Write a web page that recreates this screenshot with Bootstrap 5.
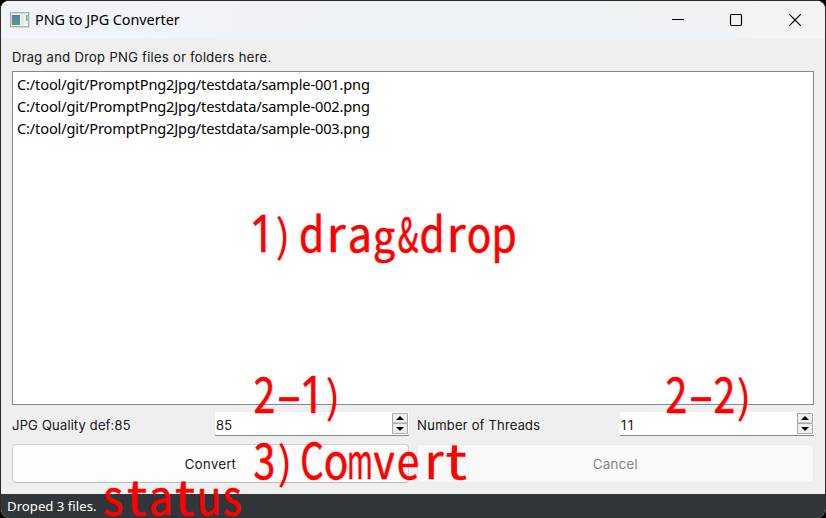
<!DOCTYPE html>
<html lang="en">
<head>
<meta charset="utf-8">
<meta name="viewport" content="width=device-width, initial-scale=1">
<title>PNG to JPG Converter</title>
<link href="https://cdn.jsdelivr.net/npm/bootstrap@5.3.0/dist/css/bootstrap.min.css" rel="stylesheet">
<style>
  body { background: #000; font-family: "Liberation Sans", sans-serif; font-size: 13px; color: #000; }
  .app-window { width: 826px; height: 518px; border: 1px solid #2b2b2d; border-bottom: 0; border-radius: 9px; background: #efefef; }
  .title-bar { height: 38px; background: linear-gradient(90deg, #f1f3f9, #edf3f7 65%, #f2f3f4); padding: 0 1px 0 9px; }
  .title-text, .file-list, .status-bar { font-family: "Noto Sans", sans-serif; }
  .title-text { font-size: 14.4px; margin-left: 5px; letter-spacing: -.05px; }
  .win-control { width: 58.5px; height: 38px; }
  .main-area { padding: 0 11px; }
  .gothic { font-family: "Inter", sans-serif; font-weight: 300; line-height: 16px; white-space: nowrap; letter-spacing: .2px; -webkit-text-stroke: .2px currentColor; }
  .hint { margin-top: 10px; height: 22px; letter-spacing: .39px; }
  .file-list { height: 334px; background: #fff; border: 1px solid #828790; padding: 1px 4px; font-size: 14.6px; letter-spacing: -.15px; line-height: 22px; }
  .settings { height: 24px; margin-top: 7px; }
  .setting-label { width: 203px; padding-top: 2px; letter-spacing: .27px; }
  .setting-label + .spin { flex: none; }
  .label-threads { width: 211px; letter-spacing: .3px; }
  .spin { width: 194px; height: 24px; background: #fff; border-bottom: 1px solid #868686; padding: 0 1px 0 1px; }
  .spin span { padding-top: 2px; }
  .digits-wide { letter-spacing: 2px; }
  .push { height: 39px; border: 1px solid #d0d0d0; border-bottom-color: #bcbcbc; border-radius: 4px; background: #fdfdfd; font-size: 13px; padding: 0; color: #000; letter-spacing: .5px; }
  .push:disabled { color: #777; background: #f9f9f9; border-color: #ebebeb; opacity: 1; }
  .status-bar { height: 24px; background: #31363a; color: #fff; font-size: 13.2px; padding-left: 6px; line-height: 25px; }
  .notes { left: 0; top: 0; pointer-events: none; }
  .notes text { font: 49px "Noto Sans CJK JP", sans-serif; fill: #f00; stroke: #f00; stroke-width: .6px; text-anchor: middle; }
  .notes .paren { font-size: 44px; stroke-width: 0; }
  .notes .one { font-family: "Noto Sans", sans-serif; }
</style>
<script src="https://cdn.jsdelivr.net/npm/bootstrap@5.3.0/dist/js/bootstrap.bundle.min.js"></script>
</head>
<body class="overflow-hidden position-relative">
<div class="app-window d-flex flex-column overflow-hidden">
  <header class="title-bar d-flex align-items-center flex-shrink-0">
    <svg width="20" height="16" viewBox="0 0 20 16"><defs><linearGradient id="g" x2="0" y2="1"><stop stop-color="#4c7fa2"/><stop offset="1" stop-color="#55a178"/></linearGradient></defs><rect x=".75" y=".75" width="18" height="14" fill="#f5f5f5" stroke="#a6a8aa" stroke-width="1.3"/><rect x="2" y="3" width="8" height="10" fill="url(#g)"/><rect x="11" y="3" width="3" height="10" fill="#e4e7e9"/><rect x="16" y="3" width="1.5" height="6" fill="#6eaa98"/></svg>
    <span class="title-text">PNG to JPG Converter</span>
    <div class="d-flex ms-auto">
      <div class="win-control d-flex align-items-center justify-content-center"><svg width="14" height="14"><path d="M1 6.5h12" stroke="#000" stroke-width="1.2"/></svg></div>
      <div class="win-control d-flex align-items-center justify-content-center"><svg width="14" height="14"><rect x="1.5" y="1.5" width="11" height="11" rx="1.4" fill="none" stroke="#000" stroke-width="1.2"/></svg></div>
      <div class="win-control d-flex align-items-center justify-content-center"><svg width="14" height="14"><path d="M1.2 1.2 12.8 12.8M12.8 1.2 1.2 12.8" stroke="#000" stroke-width="1.2"/></svg></div>
    </div>
  </header>
  <main class="main-area flex-grow-1">
    <div class="hint gothic"><span>Drag and Drop PNG files or folders here.</span></div>
    <div class="file-list">
      <div><span>C:/tool/git/PromptPng2Jpg/testdata/sample-001.png</span></div>
      <div><span>C:/tool/git/PromptPng2Jpg/testdata/sample-002.png</span></div>
      <div><span>C:/tool/git/PromptPng2Jpg/testdata/sample-003.png</span></div>
    </div>
    <div class="settings d-flex align-items-center">
      <div class="setting-label gothic">JPG Quality def:85</div>
      <div class="spin d-flex align-items-center gothic"><span>85</span>
        <svg class="ms-auto" width="16" height="21"><path d="M.5.5h15v9.5H.5zM.5 10.500h15v10H.5z" fill="#eee" stroke="#aaa"/><path d="M4 7 8 3l4 4zM4 14h8l-4 4z"/></svg></div>
      <div class="setting-label label-threads gothic ps-2">Number of Threads</div>
      <div class="spin d-flex align-items-center gothic"><span class="digits-wide">11</span>
        <svg class="ms-auto" width="16" height="21"><path d="M.5.5h15v9.5H.5zM.5 10.500h15v10H.5z" fill="#eee" stroke="#aaa"/><path d="M4 7 8 3l4 4zM4 14h8l-4 4z"/></svg></div>
    </div>
    <div class="d-flex gap-2 mt-2">
      <button class="btn push gothic w-50">Convert</button>
      <button class="btn push gothic w-50" disabled>Cancel</button>
    </div>
  </main>
  <footer class="status-bar flex-shrink-0">Droped 3 files.</footer>
</div>
<svg class="notes position-absolute" width="826" height="518">
  <g transform="translate(0 251.500)">
    <text class="one" transform="translate(262 0) scale(.9 1.03)">1</text>
    <text class="paren" transform="translate(283 0)">)</text>
    <text transform="translate(300 0) scale(.83 .96)" x="14">d</text>
    <text transform="translate(336 0) scale(1 .96)">r</text>
    <text transform="translate(300 0) scale(.88 .96)" x="68">a</text>
    <text transform="translate(384 0) scale(.8 .88)">g</text>
    <text transform="translate(408 0) scale(.62 .96)">&amp;</text>
    <text transform="translate(432 0) scale(.83 .96)">d</text>
    <text transform="translate(456 0) scale(1 .96)">r</text>
    <text transform="translate(479 0) scale(.83 .96)">o</text>
    <text transform="translate(504 0) scale(.83 .96)">p</text>
  </g>
  <g transform="translate(252 412.500)">
    <text transform="translate(12.500 0) scale(.8 1)">2</text>
    <text transform="translate(37 0) scale(1.5 1)">-</text>
    <text class="one" transform="translate(60 0) scale(.9 1.03)">1</text>
    <text class="paren" transform="translate(81 0)">)</text>
  </g>
  <g transform="translate(664 412.500)">
    <text transform="translate(12.500 0) scale(.8 1)">2</text>
    <text transform="translate(37 0) scale(1.5 1)">-</text>
    <text transform="translate(60.500 0) scale(.8 1)">2</text>
    <text class="paren" transform="translate(80 0)">)</text>
  </g>
  <g transform="translate(252 479)">
    <text transform="translate(12.500 0) scale(.8 1)">3</text>
    <text class="paren" transform="translate(33 0)">)</text>
    <text transform="translate(60 0) scale(.75 1)">C</text>
    <text transform="translate(84 0) scale(.83 .96)">o</text>
    <text transform="translate(108 0) scale(.57 .96)">m</text>
    <text transform="translate(132 0) scale(.83 .96)" x="0 29">ve</text>
    <text transform="translate(182 0) scale(1 .96)">r</text>
    <text transform="translate(204 0) scale(1.15 .96)">t</text>
  </g>
  <g transform="translate(101 514.500)">
    <text transform="translate(12 0) scale(.88 .96)">s</text>
    <text transform="translate(36 0) scale(1.1 .96)">t</text>
    <text transform="translate(60 0) scale(.88 .96)">a</text>
    <text transform="translate(84 0) scale(1.1 .96)">t</text>
    <text transform="translate(108 0) scale(.83 .96)" x="0 28">us</text>
  </g>
</svg>
</body>
</html>
